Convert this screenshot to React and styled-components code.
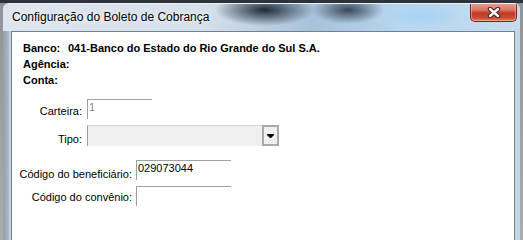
import React from "react";
import styled, { createGlobalStyle } from "styled-components";

const GlobalStyle = createGlobalStyle`
  html, body {
    margin: 0;
    padding: 0;
    min-height: 100%;
    background: #a7adb3;
  }
  * { box-sizing: border-box; }
`;

const Page = styled.div`
  width: 100%;
  min-height: 100vh;
  display: flex;
  padding: 3px 3px 0 3px;
  background: linear-gradient(to bottom, #2c333b 0, #2c333b 3px, #8e949a 3px, #a7adb3 100%);
`;

const Window = styled.div`
  width: 517px;
  flex: none;
  display: flex;
  flex-direction: column;
  border-radius: 6px 6px 0 0;
  overflow: hidden;
  border-top: 1px solid #e9eff5;
`;

const TitleBar = styled.div`
  height: 27px;
  flex: none;
  display: flex;
  align-items: flex-start;
  justify-content: space-between;
  padding-left: 9px;
  background:
    radial-gradient(ellipse 50px 16px at 262px 6px, rgba(30, 42, 56, 1), rgba(30, 42, 56, 0) 100%),
    radial-gradient(ellipse 36px 14px at 345px 6px, rgba(50, 64, 80, 0.95), rgba(50, 64, 80, 0) 100%),
    radial-gradient(ellipse 40px 12px at 420px 12px, rgba(160, 210, 245, 0.8), rgba(160, 210, 245, 0) 100%),
    linear-gradient(to right, #dde5ee 0, #d6e0ea 200px, #a8c2da 310px, #b8d6ef 400px, #c6dcef 517px);
`;

const Title = styled.span`
  margin-top: 6px;
  font-family: "Liberation Sans", Arial, sans-serif;
  font-size: 12px;
  line-height: 15px;
  color: #000;
  text-shadow: 0 0 6px rgba(255, 255, 255, 0.9), 0 0 2px rgba(255, 255, 255, 0.8);
  white-space: nowrap;
`;

const CloseButton = styled.div`
  width: 47px;
  height: 19px;
  margin-top: -1px;
  margin-right: 3px;
  display: flex;
  align-items: center;
  justify-content: center;
  border: 1px solid #6e2a20;
  border-top: none;
  border-radius: 0 0 5px 5px;
  background: linear-gradient(to bottom, #e8a494 0, #d9735f 40%, #c23a25 55%, #c8492f 80%, #de8262 100%);
  box-shadow: inset 0 0 0 1px rgba(255, 210, 200, 0.45);
`;

const FrameRow = styled.div`
  flex: 1;
  display: flex;
  padding: 0 5px 0 8px;
  background: linear-gradient(to right, #979da4 0, #a9b4bf 5px, #c4d4e4 7px, #c4d4e4 100%);
`;

const Client = styled.div`
  flex: 1;
  background: #fff;
  border: 1px solid #6f8194;
  border-bottom: none;
  padding-top: 8px;
  font-family: "Liberation Sans", Arial, sans-serif;
  font-size: 11px;
  color: #000;
`;

const InfoBlock = styled.div`
  padding-left: 11px;
  font-weight: bold;
  line-height: 16px;
`;

const InfoLine = styled.div`
  display: flex;
  white-space: nowrap;
`;

const InfoLabel = styled.span`
  width: 45px;
`;

const Section = styled.div`
  display: flex;
  flex-direction: column;
  margin-top: ${({ $top }) => $top}px;
`;

const Row = styled.div`
  display: flex;
  align-items: flex-start;
  gap: ${({ $gap }) => $gap}px;
  margin-top: ${({ $top }) => $top || 0}px;
`;

const Label = styled.span`
  width: ${({ $width }) => $width}px;
  margin-top: ${({ $offset }) => $offset}px;
  text-align: right;
  line-height: 13px;
  white-space: nowrap;
`;

const Edit = styled.div`
  width: ${({ $width }) => $width}px;
  height: 20px;
  border-top: 1px solid #a0a0a0;
  border-left: 1px solid #a0a0a0;
  padding: 1px 0 0 1px;
  line-height: 12px;
  color: ${({ $muted }) => ($muted ? "#7c8f78" : "#000")};
`;

const Combo = styled.div`
  width: 192px;
  height: 21px;
  display: flex;
  background: #f0f0f0;
`;

const ComboField = styled.div`
  flex: 1;
  border-top: 1px solid #d4d4d4;
  border-left: 1px solid #a0a0a0;
`;

const ComboButton = styled.div`
  width: 17px;
  display: flex;
  align-items: center;
  justify-content: center;
  border: 2px solid #a9a9a9;
  background: #f0f0f0;
`;

const CloseIcon = () => (
  <svg width="14" height="11" viewBox="0 0 14 11">
    <path d="M3 2 L11 9 M11 2 L3 9" stroke="#3c2420" strokeWidth="4.4" strokeLinecap="round" fill="none" />
    <path d="M3 2 L11 9 M11 2 L3 9" stroke="#fff" strokeWidth="2.4" strokeLinecap="round" fill="none" />
  </svg>
);

const ArrowIcon = () => (
  <svg width="7" height="4" viewBox="0 0 7 4">
    <polygon points="0,0 7,0 7,1 4,4 3,4 0,1" fill="#000" />
  </svg>
);

export default function App() {
  return (
    <>
      <GlobalStyle />
      <Page>
        <Window>
          <TitleBar>
            <Title>Configuração do Boleto de Cobrança</Title>
            <CloseButton>
              <CloseIcon />
            </CloseButton>
          </TitleBar>
          <FrameRow>
            <Client>
              <InfoBlock>
                <InfoLine>
                  <InfoLabel>Banco:</InfoLabel>
                  <span>041-Banco do Estado do Rio Grande do Sul S.A.</span>
                </InfoLine>
                <InfoLine>Agência:</InfoLine>
                <InfoLine>Conta:</InfoLine>
              </InfoBlock>

              <Section $top={11}>
                <Row $gap={5}>
                  <Label $width={70} $offset={6}>Carteira:</Label>
                  <Edit $width={65} $muted>1</Edit>
                </Row>
                <Row $gap={5} $top={6}>
                  <Label $width={70} $offset={8}>Tipo:</Label>
                  <Combo>
                    <ComboField />
                    <ComboButton>
                      <ArrowIcon />
                    </ComboButton>
                  </Combo>
                </Row>
              </Section>

              <Section $top={14}>
                <Row $gap={4}>
                  <Label $width={120} $offset={8}>Código do beneficiário:</Label>
                  <Edit $width={95}>029073044</Edit>
                </Row>
                <Row $gap={4} $top={5}>
                  <Label $width={120} $offset={5}>Código do convênio:</Label>
                  <Edit $width={95} />
                </Row>
              </Section>
            </Client>
          </FrameRow>
        </Window>
      </Page>
    </>
  );
}
